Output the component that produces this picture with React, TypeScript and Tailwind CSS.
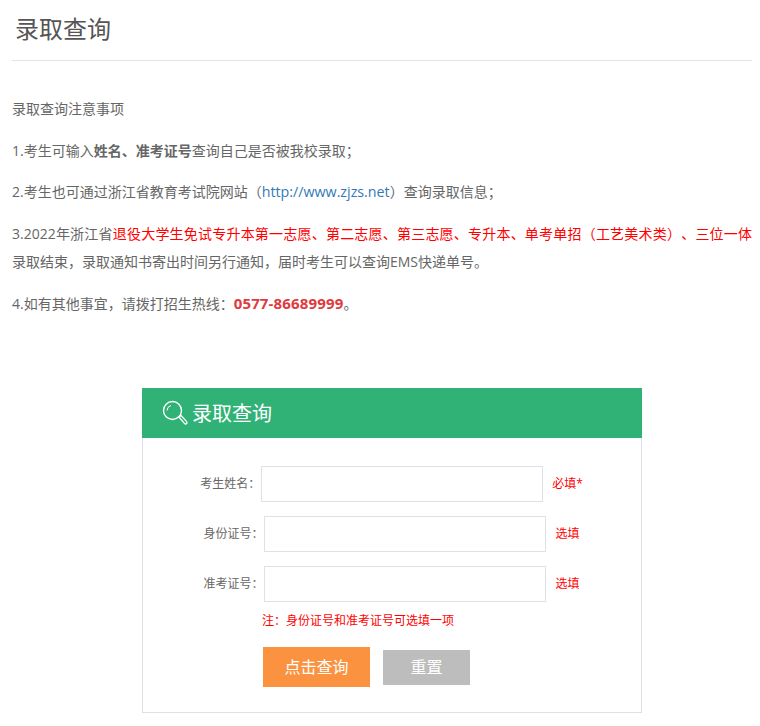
function Row({ label, tag, narrow }: { label: string; tag: string; narrow?: boolean }) {
  return (
    <div className="flex justify-center items-center h-[36px] mb-[14px] pr-[1px]">
      <span className={narrow ? "text-[12px] text-[#666666] leading-[36px]" : "text-[12px] text-[#666666] leading-[36px] mr-[1px]"}>{label}</span>
      <div className="w-[282px] h-[36px] border border-[#dfe0e8] bg-white" />
      <span className={narrow ? "text-[12px] text-[#ff0000] leading-[34px] ml-[10px]" : "text-[12px] text-[#ff0000] leading-[34px] ml-[9px]"}>{tag}</span>
    </div>
  );
}

export default function App() {
  return (
    <div className="w-[760px] h-[726px] overflow-hidden bg-white pl-[12px] pr-[8px] [font-family:'Open_Sans','Noto_Sans_CJK_SC',sans-serif] text-[#666666] [text-spacing-trim:space-all]">
      <div className="h-[61px] border-b border-[#e2e2e2] pl-[3px]">
        <h1 className="text-[24px] leading-[58px] font-normal text-[#555555]">录取查询</h1>
      </div>
      <div className="pt-[34px] text-[14px] leading-[28px]">
        <p className="mb-[13.5px]">录取查询注意事项</p>
        <p className="mb-[13.5px]">
          1.考生可输入<b className="font-bold">姓名、准考证号</b>查询自己是否被我校录取；
        </p>
        <p className="mb-[13.5px]">
          2.考生也可通过浙江省教育考试院网站（<span className="text-[#337ab7] text-[14.25px]">http://www.zjzs.net</span>）查询录取信息；
        </p>
        <p className="mb-[13.5px] text-justify">
          3.2022年浙江省<span className="text-[#ff0000]">退役大学生免试专升本第一志愿、第二志愿、第三志愿、专升本、单考单招（工艺美术类）、三位一体</span>录取结束，录取通知书寄出时间另行通知，届时考生可以查询EMS快递单号。
        </p>
        <p>
          4.如有其他事宜，请拨打招生热线：<b className="font-bold text-[#e03a3e] text-[15px] tracking-[0.15px]">0577-86689999</b>。
        </p>
      </div>
      <div className="w-[500px] mt-[70px] ml-[130px]">
        <div className="h-[50px] bg-[#30b277] flex items-center pl-[20px]">
          <svg width="26" height="26" viewBox="0 0 26 26" fill="none" stroke="#ffffff" className="mr-[4px]">
            <circle cx="10.5" cy="10.5" r="9" strokeWidth="1.4" />
            <path d="M5 10.5a5.5 5.5 0 0 1 4-5" strokeWidth="1" />
            <path d="M17 17l2-1.6 5.6 6.2a1.4 1.4 0 0 1-2 2z" strokeWidth="1.3" />
          </svg>
          <span className="text-[20px] text-white leading-[50px] pt-[2px]">录取查询</span>
        </div>
        <div className="h-[275px] border border-t-0 border-[#dfe0e8] pt-[28px]">
          <Row label="考生姓名：" tag="必填*" />
          <Row label="身份证号：" tag="选填" narrow />
          <Row label="准考证号：" tag="选填" narrow />
          <div className="pl-[119px] -mt-[5px] text-[12px] leading-[20px] text-[#ff0000]">
            注：身份证号和准考证号可选填一项
          </div>
          <div className="flex items-center pl-[120px] mt-[16px]">
            <div className="w-[107px] h-[40px] bg-[#fa923f] text-white text-[16px] leading-[40px] text-center">点击查询</div>
            <div className="w-[87px] h-[35px] ml-[13px] bg-[#bdbdbd] text-white text-[16px] leading-[35px] text-center">重置</div>
          </div>
        </div>
      </div>
    </div>
  );
}
